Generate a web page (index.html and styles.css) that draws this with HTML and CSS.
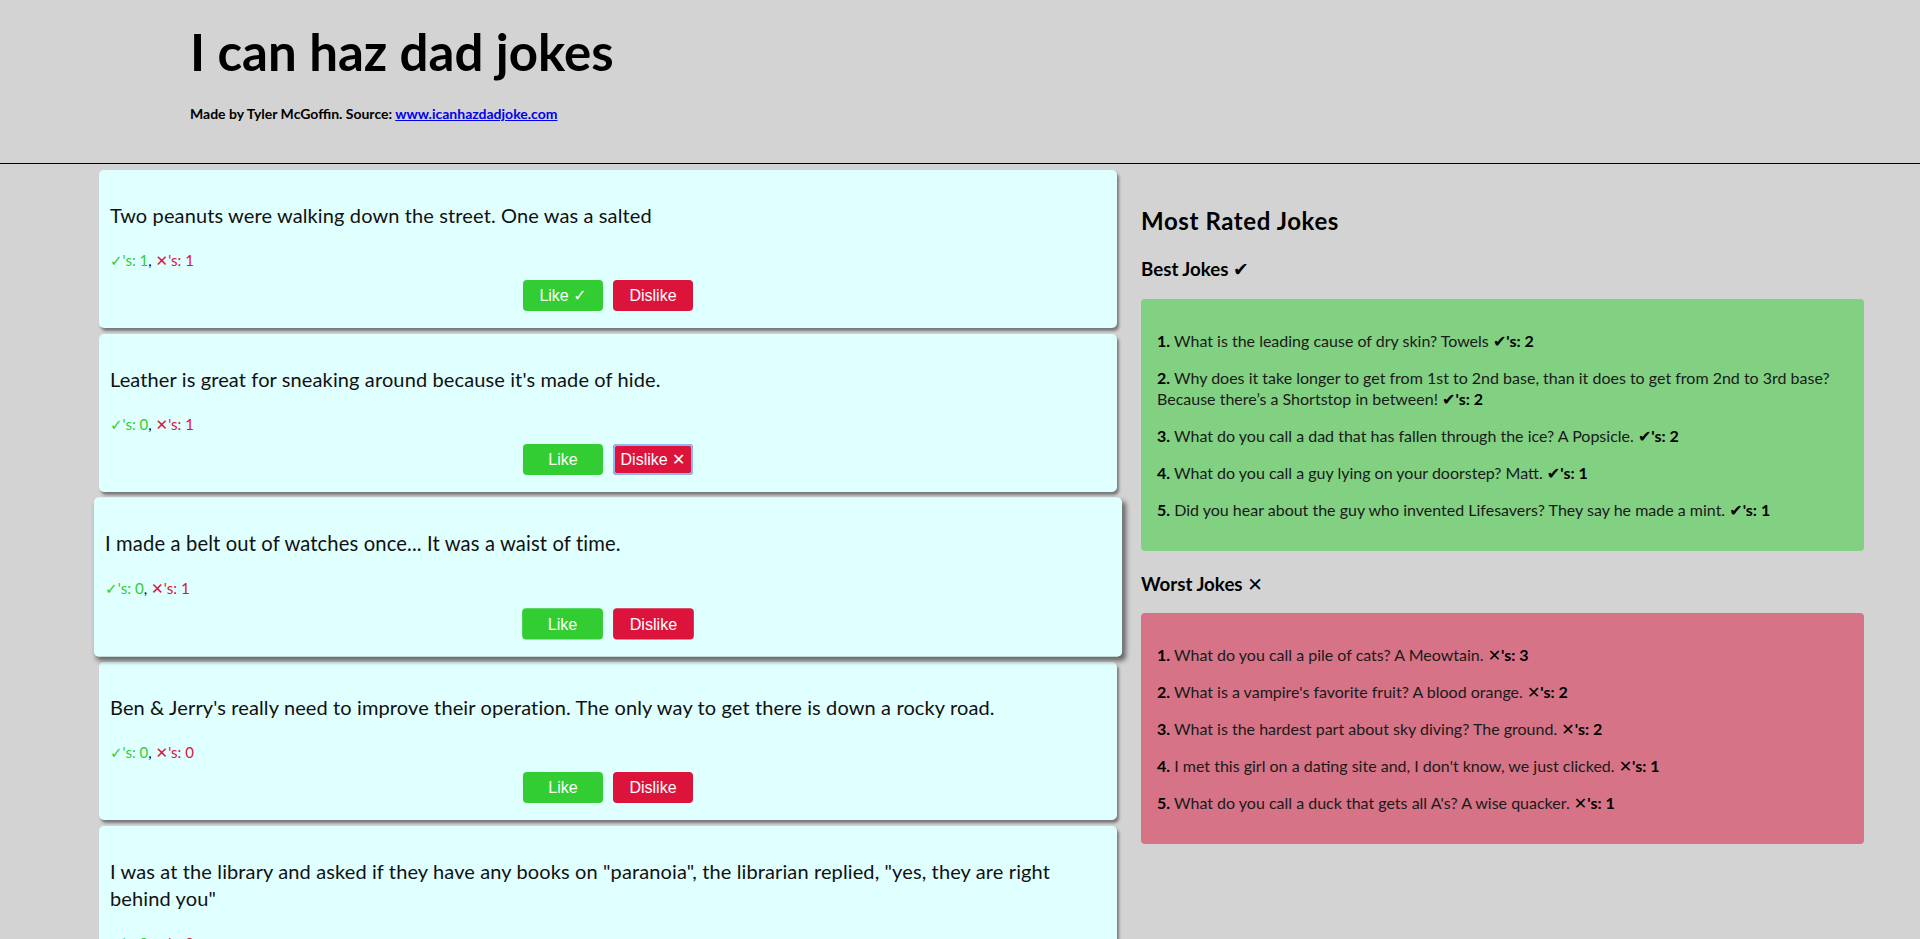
FILE: index.html
```html
<!DOCTYPE html>
<html lang="en">
<head>
<meta charset="utf-8">
<title>I can haz dad jokes</title>
<link rel="stylesheet" href="styles.css">
</head>
<body>
<header class="site-header">
  <h1 class="title">I can haz dad jokes</h1>
  <p class="byline">Made by Tyler McGoffin. Source: <a href="#">www.icanhazdadjoke.com</a></p>
</header>
<main class="layout">
  <section class="joke-list">
    <article class="card">
      <p class="joke">Two peanuts were walking down the street. One was a salted</p>
      <p class="counts"><span class="yes"><span class="ck">✓</span>'s: 1</span>, <span class="no"><span class="x">✕</span>'s: 1</span></p>
      <div class="actions"><button class="btn btn-like">Like <span class="ck">✓</span></button><button class="btn btn-dislike">Dislike</button></div>
    </article>
    <article class="card">
      <p class="joke">Leather is great for sneaking around because it's made of hide.</p>
      <p class="counts"><span class="yes"><span class="ck">✓</span>'s: 0</span>, <span class="no"><span class="x">✕</span>'s: 1</span></p>
      <div class="actions"><button class="btn btn-like">Like</button><button class="btn btn-dislike focused">Dislike <span class="x">✕</span></button></div>
    </article>
    <article class="card hovered">
      <p class="joke">I made a belt out of watches once... It was a waist of time.</p>
      <p class="counts"><span class="yes"><span class="ck">✓</span>'s: 0</span>, <span class="no"><span class="x">✕</span>'s: 1</span></p>
      <div class="actions"><button class="btn btn-like">Like</button><button class="btn btn-dislike">Dislike</button></div>
    </article>
    <article class="card">
      <p class="joke">Ben &amp; Jerry's really need to improve their operation. The only way to get there is down a rocky road.</p>
      <p class="counts"><span class="yes"><span class="ck">✓</span>'s: 0</span>, <span class="no"><span class="x">✕</span>'s: 0</span></p>
      <div class="actions"><button class="btn btn-like">Like</button><button class="btn btn-dislike">Dislike</button></div>
    </article>
    <article class="card">
      <p class="joke">I was at the library and asked if they have any books on "paranoia", the librarian replied, "yes, they are right behind you"</p>
      <p class="counts"><span class="yes"><span class="ck">✓</span>'s: 0</span>, <span class="no"><span class="x">✕</span>'s: 0</span></p>
      <div class="actions"><button class="btn btn-like">Like</button><button class="btn btn-dislike">Dislike</button></div>
    </article>
    <article class="card">
      <p class="joke">What is the leading cause of dry skin? Towels</p>
      <p class="counts"><span class="yes"><span class="ck">✓</span>'s: 2</span>, <span class="no"><span class="x">✕</span>'s: 0</span></p>
      <div class="actions"><button class="btn btn-like">Like</button><button class="btn btn-dislike">Dislike</button></div>
    </article>
    <article class="card">
      <p class="joke">What do you call a pile of cats? A Meowtain.</p>
      <p class="counts"><span class="yes"><span class="ck">✓</span>'s: 0</span>, <span class="no"><span class="x">✕</span>'s: 3</span></p>
      <div class="actions"><button class="btn btn-like">Like</button><button class="btn btn-dislike">Dislike</button></div>
    </article>
    <article class="card">
      <p class="joke">What do you call a dad that has fallen through the ice? A Popsicle.</p>
      <p class="counts"><span class="yes"><span class="ck">✓</span>'s: 2</span>, <span class="no"><span class="x">✕</span>'s: 0</span></p>
      <div class="actions"><button class="btn btn-like">Like</button><button class="btn btn-dislike">Dislike</button></div>
    </article>
    <article class="card">
      <p class="joke">What is a vampire's favorite fruit? A blood orange.</p>
      <p class="counts"><span class="yes"><span class="ck">✓</span>'s: 0</span>, <span class="no"><span class="x">✕</span>'s: 2</span></p>
      <div class="actions"><button class="btn btn-like">Like</button><button class="btn btn-dislike">Dislike</button></div>
    </article>
    <article class="card">
      <p class="joke">What do you call a guy lying on your doorstep? Matt.</p>
      <p class="counts"><span class="yes"><span class="ck">✓</span>'s: 1</span>, <span class="no"><span class="x">✕</span>'s: 0</span></p>
      <div class="actions"><button class="btn btn-like">Like</button><button class="btn btn-dislike">Dislike</button></div>
    </article>
    <article class="card">
      <p class="joke">What is the hardest part about sky diving? The ground.</p>
      <p class="counts"><span class="yes"><span class="ck">✓</span>'s: 0</span>, <span class="no"><span class="x">✕</span>'s: 2</span></p>
      <div class="actions"><button class="btn btn-like">Like</button><button class="btn btn-dislike">Dislike</button></div>
    </article>
    <article class="card">
      <p class="joke">Did you hear about the guy who invented Lifesavers? They say he made a mint.</p>
      <p class="counts"><span class="yes"><span class="ck">✓</span>'s: 1</span>, <span class="no"><span class="x">✕</span>'s: 0</span></p>
      <div class="actions"><button class="btn btn-like">Like</button><button class="btn btn-dislike">Dislike</button></div>
    </article>
    <article class="card">
      <p class="joke">I met this girl on a dating site and, I don't know, we just clicked.</p>
      <p class="counts"><span class="yes"><span class="ck">✓</span>'s: 0</span>, <span class="no"><span class="x">✕</span>'s: 1</span></p>
      <div class="actions"><button class="btn btn-like">Like</button><button class="btn btn-dislike">Dislike</button></div>
    </article>
    <article class="card">
      <p class="joke">What do you call a duck that gets all A's? A wise quacker.</p>
      <p class="counts"><span class="yes"><span class="ck">✓</span>'s: 0</span>, <span class="no"><span class="x">✕</span>'s: 1</span></p>
      <div class="actions"><button class="btn btn-like">Like</button><button class="btn btn-dislike">Dislike</button></div>
    </article>
    <article class="card">
      <p class="joke">Why does it take longer to get from 1st to 2nd base, than it does to get from 2nd to 3rd base? Because there’s a Shortstop in between!</p>
      <p class="counts"><span class="yes"><span class="ck">✓</span>'s: 2</span>, <span class="no"><span class="x">✕</span>'s: 0</span></p>
      <div class="actions"><button class="btn btn-like">Like</button><button class="btn btn-dislike">Dislike</button></div>
    </article>
    <article class="card">
      <p class="joke">I'm reading a book about anti-gravity. It's impossible to put down.</p>
      <p class="counts"><span class="yes"><span class="ck">✓</span>'s: 0</span>, <span class="no"><span class="x">✕</span>'s: 0</span></p>
      <div class="actions"><button class="btn btn-like">Like</button><button class="btn btn-dislike">Dislike</button></div>
    </article>
    <article class="card">
      <p class="joke">I used to hate facial hair, but then it grew on me.</p>
      <p class="counts"><span class="yes"><span class="ck">✓</span>'s: 0</span>, <span class="no"><span class="x">✕</span>'s: 0</span></p>
      <div class="actions"><button class="btn btn-like">Like</button><button class="btn btn-dislike">Dislike</button></div>
    </article>
    <article class="card">
      <p class="joke">What do you call a fake noodle? An impasta.</p>
      <p class="counts"><span class="yes"><span class="ck">✓</span>'s: 0</span>, <span class="no"><span class="x">✕</span>'s: 0</span></p>
      <div class="actions"><button class="btn btn-like">Like</button><button class="btn btn-dislike">Dislike</button></div>
    </article>
    <article class="card">
      <p class="joke">How does a penguin build its house? Igloos it together.</p>
      <p class="counts"><span class="yes"><span class="ck">✓</span>'s: 0</span>, <span class="no"><span class="x">✕</span>'s: 0</span></p>
      <div class="actions"><button class="btn btn-like">Like</button><button class="btn btn-dislike">Dislike</button></div>
    </article>
    <article class="card">
      <p class="joke">Why don't skeletons ever go trick or treating? Because they have no body to go with.</p>
      <p class="counts"><span class="yes"><span class="ck">✓</span>'s: 0</span>, <span class="no"><span class="x">✕</span>'s: 0</span></p>
      <div class="actions"><button class="btn btn-like">Like</button><button class="btn btn-dislike">Dislike</button></div>
    </article>
  </section>
  <aside class="rated">
    <h2 class="rated-title">Most Rated Jokes</h2>
    <h3 class="rated-sub">Best Jokes <span class="ck">✔</span></h3>
    <div class="box box-best">
      <p><b>1.</b> What is the leading cause of dry skin? Towels <b><span class="ck">✔</span>'s: 2</b></p>
      <p><b>2.</b> Why does it take longer to get from 1st to 2nd base, than it does to get from 2nd to 3rd base? Because there’s a Shortstop in between! <b><span class="ck">✔</span>'s: 2</b></p>
      <p><b>3.</b> What do you call a dad that has fallen through the ice? A Popsicle. <b><span class="ck">✔</span>'s: 2</b></p>
      <p><b>4.</b> What do you call a guy lying on your doorstep? Matt. <b><span class="ck">✔</span>'s: 1</b></p>
      <p><b>5.</b> Did you hear about the guy who invented Lifesavers? They say he made a mint. <b><span class="ck">✔</span>'s: 1</b></p>
    </div>
    <h3 class="rated-sub rated-sub-spaced">Worst Jokes <span class="x">✕</span></h3>
    <div class="box box-worst">
      <p><b>1.</b> What do you call a pile of cats? A Meowtain. <b><span class="x">✕</span>'s: 3</b></p>
      <p><b>2.</b> What is a vampire's favorite fruit? A blood orange. <b><span class="x">✕</span>'s: 2</b></p>
      <p><b>3.</b> What is the hardest part about sky diving? The ground. <b><span class="x">✕</span>'s: 2</b></p>
      <p><b>4.</b> I met this girl on a dating site and, I don't know, we just clicked. <b><span class="x">✕</span>'s: 1</b></p>
      <p><b>5.</b> What do you call a duck that gets all A's? A wise quacker. <b><span class="x">✕</span>'s: 1</b></p>
    </div>
  </aside>
</main>
</body>
</html>
```
FILE: styles.css
```css
html, body {
  margin: 0;
  background: #d3d3d3;
  font-family: Lato, "Open Sans", "DejaVu Sans", sans-serif;
  color: #000;
}

::-webkit-scrollbar { width: 17px; background: #f1f1f1; }
::-webkit-scrollbar-track { background: #f1f1f1; }
::-webkit-scrollbar-thumb { background: #c1c1c1; border: 2px solid #f1f1f1; }
::-webkit-scrollbar-button:single-button { display: block; height: 17px; background: #f1f1f1; }

.site-header {
  height: 163px;
  padding: 0 0 0 190px;
  border-bottom: 1px solid #000;
  overflow: hidden;
}

.title {
  margin: 21px 0 0;
  font-size: 51px;
  line-height: 62px;
  font-weight: 700;
}

.byline {
  margin: 22px 0 0;
  font-size: 14px;
  line-height: 18px;
  font-weight: 700;
}

.byline a { color: #0000ee; }

.layout {
  display: grid;
  grid-template-columns: 1018px 723px;
  column-gap: 24px;
  align-items: start;
  padding: 6px 0 40px 99px;
}

.joke-list {
  display: flex;
  flex-direction: column;
  gap: 6px;
}

.card {
  background: #e0ffff;
  border-radius: 5px;
  box-shadow: 2px 3px 3px #777;
  padding: 10px 11px 17.5px;
}

.card.hovered {
  transform: scale(1.01);
  box-shadow: 3px 4px 5px #666;
}

.joke {
  margin: 21.5px 9px 21px 0;
  font-size: 20px;
  line-height: 27px;
  letter-spacing: 0.12px;
  color: #111;
}

.counts {
  margin: 0 0 10px;
  font-size: 15px;
  line-height: 20px;
}

.yes { color: #32cd32; }
.no { color: #dc143c; }

.x, .ck {
  font-family: "DejaVu Sans", sans-serif;
  line-height: 0;
}

.x { font-weight: 700; }

.actions {
  display: flex;
  justify-content: center;
  gap: 10px;
}

.btn {
  width: 80px;
  height: 31px;
  padding: 0;
  border: none;
  border-radius: 4px;
  color: #fff;
  font-family: "Liberation Sans", Arial, "DejaVu Sans", sans-serif;
  font-size: 16px;
  line-height: 31px;
}

.btn .ck { font-weight: 700; }

.btn-like { background: #32cd32; }
.btn-dislike { background: #dc143c; }
.btn.focused { box-shadow: inset 0 0 0 2px #93b5f3; }

.rated { padding-top: 15px; }

.rated-title {
  margin: 20px 0 0;
  font-size: 24px;
  line-height: 32px;
  letter-spacing: 0.6px;
}

.rated-sub {
  margin: 20px 0 16.5px;
  font-size: 18.72px;
  line-height: 25px;
}

.rated-sub-spaced { margin-top: 21px; }

.box {
  border-radius: 4px;
  padding: 15px 16px;
  color: #1a1a1a;
}

.box p {
  margin: 16px 0;
  font-size: 16px;
  line-height: 21px;
}

.box b { color: #000; }

.box-best { background: rgba(50, 205, 50, 0.5); }
.box-worst { background: rgba(220, 20, 60, 0.5); }
```
